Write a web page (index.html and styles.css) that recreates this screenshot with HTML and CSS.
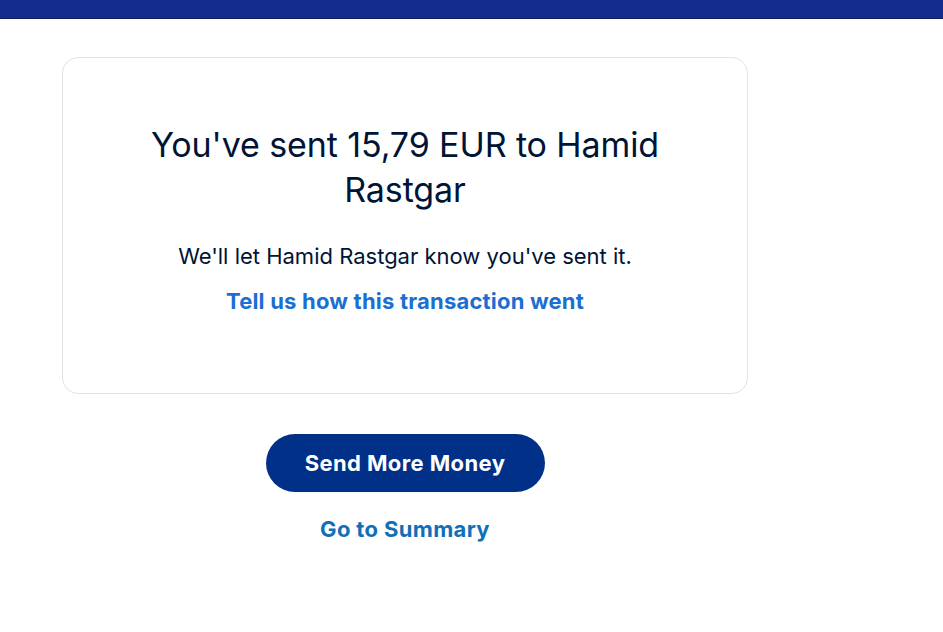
FILE: index.html
```html
<!DOCTYPE html>
<html lang="en">
<head>
    <meta charset="UTF-8">
    <meta name="viewport" content="width=device-width, initial-scale=1.0">
    <title>Payment sent</title>
    <link rel="stylesheet" href="styles.css">
</head>
<body>
    <header class="topbar"></header>
    <main class="page">
        <section class="card">
            <h1>You've sent 15,79 EUR to Hamid Rastgar</h1>
            <p class="note">We'll let Hamid Rastgar know you've sent it.</p>
            <a class="feedback" href="#">Tell us how this transaction went</a>
        </section>
        <div class="actions">
            <button class="primary" type="button">Send More Money</button>
            <a class="summary" href="#">Go to Summary</a>
        </div>
    </main>
</body>
</html>
```

FILE: styles.css
```css
* {
    margin: 0;
    padding: 0;
    box-sizing: border-box;
    font-family: Inter, 'Liberation Sans', sans-serif;
}

body {
    background: #fff;
    color: #001435;
}

.topbar {
    height: 19px;
    background: #142c8e;
    border-bottom: 1px solid #0d1f5c;
}

.page {
    width: 686px;
    margin-left: 62px;
    padding-top: 38px;
}

.card {
    border: 1px solid #e3e3e3;
    border-radius: 16px;
    height: 337px;
    padding: 64px 40px 0;
    display: flex;
    flex-direction: column;
    align-items: center;
    text-align: center;
}

h1 {
    font-size: 34px;
    font-weight: 400;
    line-height: 45px;
    max-width: 560px;
    letter-spacing: -0.1px;
}

.note {
    margin-top: 29px;
    font-size: 22px;
    line-height: 30px;
}

.feedback {
    margin-top: 15px;
    font-size: 22px;
    font-weight: 700;
    line-height: 30px;
    color: #1a6fd1;
    text-decoration: none;
    letter-spacing: 0.2px;
}

.actions {
    display: flex;
    flex-direction: column;
    align-items: center;
    padding-top: 40px;
}

.primary {
    width: 279px;
    height: 58px;
    border: none;
    border-radius: 29px;
    background: #003087;
    color: #fff;
    font-size: 22px;
    font-weight: 700;
    letter-spacing: 0.4px;
    cursor: pointer;
}

.summary {
    margin-top: 22px;
    font-size: 22px;
    font-weight: 700;
    line-height: 30px;
    color: #0f6fb8;
    text-decoration: none;
    letter-spacing: 0.35px;
}
```
